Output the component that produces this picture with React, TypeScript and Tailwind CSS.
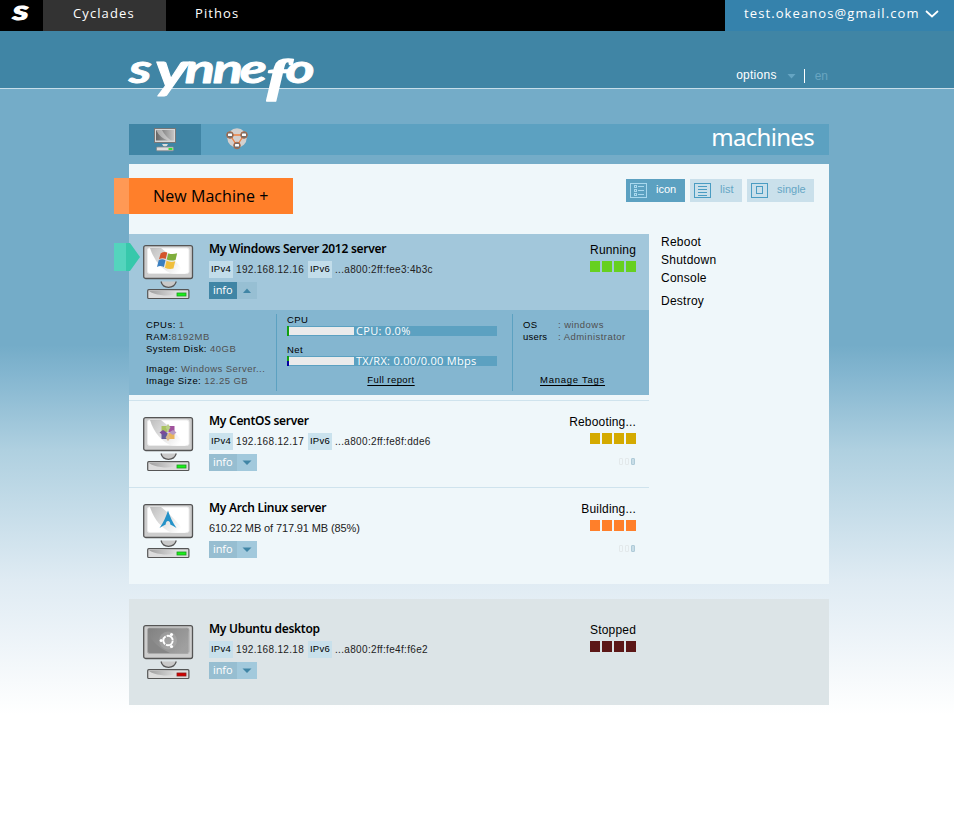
import React from "react";

const LIB = "font-['Liberation_Sans',sans-serif]";

type Os = "windows" | "centos" | "arch" | "ubuntu";

function OsLogo({ os }: { os: Os }) {
  if (os === "windows")
    return (
      <g transform="translate(14 5.500) scale(1.06)">
        <path d="M3.5 2.5Q7 .6 9.7 2L8.2 8Q5.200 6.500 1.900 8.200Z" fill="#d3542b" />
        <path d="M10.700 2.500Q14 4.200 19 2.700L17.500 9Q13 10.300 9.200 8.500Z" fill="#7fae3c" />
        <path d="M1.600 9.200Q5 7.500 8 9.200L6.500 15.500Q3.200 13.800 0 15.500Z" fill="#3b7fc0" />
        <path d="M9 9.700Q12.600 11.500 17.200 10.200L15.500 17Q11.500 18.200 7.500 16.200Z" fill="#f0bf3c" />
      </g>
    );
  if (os === "centos")
    return (
      <g transform="translate(25 15.500)">
        <rect x="-5.800" y="-5.800" width="11.600" height="11.600" fill="#d9c8dc" transform="rotate(45)" />
        <rect x="-6.500" y="-6.500" width="6" height="6" fill="#a9c15e" />
        <rect x=".5" y="-6.500" width="6" height="6" fill="#a0529d" />
        <rect x="-6.500" y=".5" width="6" height="6" fill="#635b9b" />
        <rect x=".5" y=".5" width="6" height="6" fill="#e8b45c" />
        <path d="M0 -8.500L2.400 -5L0 -1L-2.400 -5Z" fill="#b9cf86" />
        <path d="M8.500 0L5 2.400L1 0L5 -2.400Z" fill="#b79ac4" />
        <path d="M0 8.500L2.400 5L0 1L-2.400 5Z" fill="#d9b98a" />
        <path d="M-8.500 0L-5 2.400L-1 0L-5 -2.400Z" fill="#7a4a99" />
      </g>
    );
  if (os === "arch")
    return (
      <path d="M25 6.500C23.500 12 20 19 16.500 24Q20 21.500 22.700 20.500Q22.800 17 25 17Q27.200 17 27.300 20.500Q30 21.500 33.500 24C30 19 26.500 12 25 6.500Z" fill="#2492c8" />
    );
  return (
    <g transform="translate(25 15.500)" fill="none" stroke="#fff">
      <circle r="9" fill="#fff" fillOpacity=".13" stroke="none" />
      <circle r="4.700" strokeWidth="1.900" strokeDasharray="8.800 1.050" strokeDashoffset="-.5" />
      <g fill="#fff" stroke="none">
        <circle cx="-6.800" r="1.600" />
        <circle cx="3.500" cy="-6" r="1.600" />
        <circle cx="3.500" cy="6" r="1.600" />
      </g>
    </g>
  );
}

function Monitor({ os }: { os: Os }) {
  const off = os === "ubuntu";
  return (
    <svg width="51" height="56" viewBox="0 0 51 56" className="mt-px block">
      <defs>
        <linearGradient id={"gloss" + os} x1="0" y1="0" x2="1" y2=".6">
          <stop offset="0" stopColor={off ? "#777" : "#a9a9a9"} />
          <stop offset="1" stopColor={off ? "#cfcfcf" : "#fff"} />
        </linearGradient>
        <linearGradient id={"base" + os} x1="0" y1="0" x2="1" y2="0">
          <stop offset="0" stopColor="#9f9f9f" />
          <stop offset="1" stopColor="#e4e4e4" />
        </linearGradient>
      </defs>
      <path d="M18 36.500Q19.500 42.300 25.500 42.300Q31.500 42.300 33.300 36.500Z" fill="#c9c9c9" />
      <path d="M18 36.500Q19.500 42.300 25.500 42.300Q31.500 42.300 33.300 36.500" fill="none" stroke="#555" strokeWidth="1.200" />
      <rect x=".7" y=".7" width="48.800" height="32.800" rx="2" fill="#cdcdcd" stroke="#555" strokeWidth="1.300" />
      <rect x="4.500" y="3" width="41.500" height="25.500" rx="2" fill={off ? "#868686" : "#fff"} stroke={off ? "#aaa" : "#ececec"} />
      <path
        d={off ? "M5 3H40Q46 3 46 8V28H27Q10 21 5 7Z" : "M7 3H18Q30 12 43 29H29Q13 22 7 3Z"}
        fill={"url(#gloss" + os + ")"}
        opacity={off ? ".35" : ".75"}
      />
      <rect x="4.700" y="44.700" width="41.200" height="8.800" rx="1" fill="#dcdcdc" stroke="#555" strokeWidth="1.200" />
      <path d="M6 46H36Q30 52 18 50Q10 49 6 46Z" fill={"url(#base" + os + ")"} />
      <rect x="34" y="48" width="9" height="3" fill={off ? "#d40000" : "#19f01a"} stroke={off ? "#891c1c" : "#1e9a22"} strokeWidth=".8" />
      <OsLogo os={os} />
    </svg>
  );
}

function Ips({ v4, v6 }: { v4: string; v6: string }) {
  const tag = "flex h-[17px] w-6 items-center justify-center bg-[#c5dfeb]/90 tracking-[.3px] text-black";
  return (
    <div className="flex h-[17px] items-center whitespace-nowrap text-[9.5px] text-[#222]">
      <span className={tag}>IPv4</span>
      <span className="ml-[3px] w-[72px] text-[10px] tracking-[.32px]">{v4}</span>
      <span className={tag}>IPv6</span>
      <span className="ml-[3px] text-[10px] tracking-[.33px]">{v6}</span>
    </div>
  );
}

function Machine({ os, name, state, color, children, open, busy }: {
  os: Os; name: string; state: string; color: string; children: React.ReactNode; open?: boolean; busy?: boolean;
}) {
  return (
    <div className="flex h-[76px] w-[520px] pt-[10px] pl-[14px]">
      <Monitor os={os} />
      <div className="ml-[15px] w-[280px] -mt-[4px]">
        <h3 className="h-[21px] whitespace-nowrap font-['Noto_Sans',sans-serif] text-[12px] leading-[17px] font-semibold tracking-[-.28px] text-black">{name}</h3>
        {children}
        <div className="mt-[4px] flex h-[17px] w-12 font-['Open_Sans',sans-serif] text-[11px] leading-[16px] text-white">
          <span className={"w-7 pl-1 tracking-[-.1px] " + (open ? "bg-[#4085a5]" : "bg-[#97bed1]")}>info</span>
          <span className={"flex w-5 items-center justify-center " + (open ? "bg-[#97bfd3]" : "bg-[#a2c9dc]")}>
            <svg width="10" height="5" viewBox="0 0 10 5">
              <path d={open ? "M1 5L5 .5L9 5Z" : "M.5 .5H9.500L5 5Z"} fill="#4085a5" />
            </svg>
          </span>
        </div>
      </div>
      <div className="flex w-[147px] flex-col items-end">
        <span className="h-[17px] text-[12px] leading-[13px] tracking-[.18px] text-black">{state}</span>
        <div className="flex gap-[2px]">
          {[0, 1, 2, 3].map((i) => <i key={i} className={"h-[11px] w-[10px] " + color} />)}
        </div>
        {busy && (
          <div className="mt-[14px] mr-px flex gap-[2px]">
            <i className="h-[7px] w-1 rounded-[1px] border border-[#e3e9eb]" />
            <i className="h-[7px] w-1 rounded-[1px] border border-[#e3e9eb]" />
            <i className="h-[7px] w-1 rounded-[1px] border border-[#afcbd8] bg-[#c8dde7]" />
          </div>
        )}
      </div>
    </div>
  );
}

function Field({ k, v }: { k: string; v: string }) {
  return <div className="h-3 whitespace-nowrap"><span className="text-black">{k}</span><span className="text-[#505050]">{v}</span></div>;
}

function Meter({ label, text, net }: { label: string; text: string; net?: boolean }) {
  return (
    <div className="h-[30px]">
      <div className="h-[12px] text-[9.5px] leading-[12px] tracking-[.4px] text-black">{label}</div>
      <div className="flex h-[10px] w-[210px] bg-[#5ca1c1]">
        <div className="w-[2px] bg-[#10a010]">{net && <div className="mt-[5px] h-[5px] bg-[#0000a0]" />}</div>
        <div className="my-px w-[65px] bg-[#ebebeb]" />
        <span className="ml-[2px] font-['Open_Sans',sans-serif] text-[11px] leading-[10px] tracking-[.3px] whitespace-nowrap text-white">{text}</span>
      </div>
    </div>
  );
}

function Details() {
  return (
    <div className="flex h-[85px] w-[520px] bg-[#84b6d0] py-1 text-[9.5px] leading-[12px] tracking-[.46px]">
      <div className="w-[148px] border-r border-[#5ca1c1] pt-[5px] pl-[17px]">
        <Field k="CPUs: " v="1" />
        <Field k="RAM:" v="8192MB" />
        <Field k="System Disk: " v="40GB" />
        <div className="mt-2">
          <Field k="Image: " v="Windows Server..." />
          <Field k="Image Size: " v="12.25 GB" />
        </div>
      </div>
      <div className="w-[236px] border-r border-[#5ca1c1] pl-[10px]">
        <Meter label="CPU" text="CPU: 0.0%" />
        <Meter label="Net" text="TX/RX: 0.00/0.00 Mbps" net />
        <div className="w-[208px] text-center text-[9.5px] tracking-[.42px] text-black underline underline-offset-2">Full report</div>
      </div>
      <div className="flex flex-col pt-[5px] pl-[10px]">
        <div className="flex h-3"><span className="w-[35px] text-black">OS</span><span className="text-[#505050]">: windows</span></div>
        <div className="flex h-3"><span className="w-[35px] tracking-[.2px] text-black">users</span><span className="text-[#505050]">: Administrator</span></div>
        <div className="mt-[31px] ml-[17px] tracking-[.74px] text-black underline underline-offset-2">Manage Tags</div>
      </div>
    </div>
  );
}

function ViewIcon({ kind }: { kind: string }) {
  const c = kind === "icon" ? "#a9d8ee" : "#4a9cc2";
  return (
    <svg width="17" height="15" viewBox="0 0 17 15" fill="none" stroke={c} shapeRendering="crispEdges">
      <rect x=".5" y=".5" width="16" height="14" />
      {kind === "icon" && <path d="M4.500 2.500h2v2h-2zM4.500 6.500h2v2h-2zM4.500 10.500h2v2h-2zM8 3.500h6M8 7.500h6M8 11.500h6" />}
      {kind === "list" && <path d="M4 3.500h9M4 6.500h9M4 9.500h9M4 12.500h9" />}
      {kind === "single" && <path d="M5.500 3.500h6v7h-6z" />}
    </svg>
  );
}

function ViewButton({ kind, width }: { kind: string; width: string }) {
  return (
    <div className={"flex h-[23px] pl-1 pt-1 text-[11px] leading-[12px] " + width + (kind === "icon" ? " bg-[#5ca1c1] text-white" : " bg-[#cae0eb] text-[#65a6c5]")}>
      <ViewIcon kind={kind} />
      <span className="ml-[9px]">{kind}</span>
    </div>
  );
}

function TabMonitor() {
  return (
    <svg width="22" height="24" viewBox="0 0 22 24">
      <defs><linearGradient id="tabscreen"><stop stopColor="#666" /><stop offset="1" stopColor="#c4c4c4" /></linearGradient></defs>
      <rect x=".5" y=".5" width="21" height="14" fill="#d8d8d8" stroke="#777" />
      <rect x="2" y="2" width="18" height="10.500" fill="url(#tabscreen)" />
      <path d="M2 2H8Q11 8 17 12.500H14Q6 10 2 2Z" fill="#e8e8e8" opacity=".5" />
      <path d="M8 16H14Q13 18.500 11 18.500T8 16Z" fill="#ddd" />
      <rect x="2.500" y="19" width="17" height="3.800" rx="1" fill="#ddd" stroke="#888" strokeWidth=".8" />
      <rect x="14.500" y="20" width="4" height="2" fill="#38df38" />
    </svg>
  );
}

function TabNetwork() {
  return (
    <svg width="23" height="23" viewBox="0 0 23 23">
      <circle cx="11" cy="10" r="9.700" fill="#d3d0ce" />
      <path d="M4 7H18L11 17.500Z" fill="none" stroke="#f08040" strokeWidth="1.300" />
      {[[4, 7], [18, 7], [11, 17.5]].map(([x, y]) => (
        <g key={x}>
          <circle cx={x} cy={y} r="3.300" fill="#6f6f6f" stroke="#b06a45" />
          <rect x={x - 2} y={y - 1.500} width="4" height="2.500" rx=".5" fill="#fff" />
        </g>
      ))}
    </svg>
  );
}

export default function App() {
  return (
    <div className={"h-[825px] overflow-hidden bg-[linear-gradient(to_bottom,#74acc8_345px,#84b6d0_375px,#afd0e0_450px,#dfebf3_580px,#fff_715px)] " + LIB}>
      <nav className="flex h-[31px] bg-black font-['Open_Sans',sans-serif] text-[13px] leading-[27px] tracking-[1.1px] text-white">
        <div className="w-[43px]">
          <svg className="block" width="43" height="31" viewBox="0 0 43 31">
            <text x="12.500" y="19.500" textLength="15.500" lengthAdjust="spacingAndGlyphs" fill="#fff" stroke="#fff" strokeWidth="1.100" letterSpacing="0" className="font-['Lato',sans-serif] text-[18px] font-black italic">S</text>
          </svg>
        </div>
        <div className="w-[123px] bg-[#333] pl-[30px]">Cyclades</div>
        <div className="flex-1 pl-[29px]">Pithos</div>
        <div className="flex w-[229px] bg-[#3582ac] pl-[19px]">
          <span className="w-[175px]">test.okeanos@gmail.com</span>
          <svg className="mt-[10px] ml-[6px]" width="14" height="8" viewBox="0 0 14 8"><path d="M1 1L7 6.500L13 1" fill="none" stroke="#fff" strokeWidth="1.700" /></svg>
        </div>
      </nav>
      <header className="h-[58px] border-b border-[#c7deea] bg-[#4085a5]">
        <div className="mx-auto flex w-[700px] translate-x-[2px] justify-between">
          <svg className="mt-[22px] shrink-0 overflow-visible" width="190" height="56" viewBox="0 0 190 56">
            <text transform="scale(1.36 1)" x="0 19 41 61.500 81.500 101.500 115" y="30" fill="#fff" stroke="#fff" strokeWidth=".9" strokeLinejoin="round" className="font-['Lato',sans-serif] text-[41px] font-bold italic">
              s<tspan dy="5" className="text-[50px]">y</tspan><tspan dy="-5">nne</tspan><tspan dy="8" strokeWidth="1.600" className="font-['Liberation_Serif',serif] text-[46px]">f</tspan><tspan dy="-8">o</tspan>
            </text>
          </svg>
          <div className="mt-[36px] mr-px flex h-[16px] text-[12px] leading-[16px] text-white">
            <span className="tracking-[.25px]">options</span>
            <svg className="mt-[7px] ml-[10px]" width="9" height="5" viewBox="0 0 9 5"><path d="M.5 0H8.500L4.500 4.500Z" fill="#65a5c3" /></svg>
            <span className="mt-[2px] ml-[8px] h-[14px] w-px bg-white" />
            <span className="ml-[10px] pt-px text-[#69a5c1]">en</span>
          </div>
        </div>
      </header>
      <main className="mx-auto mt-[35px] w-[700px] translate-x-[2px]">
        <div className="flex h-[31px] bg-[#5ca1c1]">
          <div className="flex w-[72px] justify-center bg-[#4085a5] pt-1"><TabMonitor /></div>
          <div className="w-[72px] pt-1 pl-[25px]"><TabNetwork /></div>
          <h1 className="ml-auto pr-[15px] font-['Noto_Sans',sans-serif] text-[24px] leading-[26px] tracking-[-.7px] text-white">machines</h1>
        </div>
        <section className="mt-[9px] h-[420px] bg-[#eff7fa] pt-[14px]">
          <div className="flex h-[56px] items-start">
            <div className="-ml-[15px] flex h-9 w-[179px] border-l-[15px] border-[#ff9955] bg-[#ff7f2a] pl-[24px] font-['Open_Sans',sans-serif] text-[16px] leading-[36px] tracking-[.08px] whitespace-nowrap text-black">New Machine +</div>
            <div className="mt-px mr-[15px] ml-auto flex gap-[5px]">
              <ViewButton kind="icon" width="w-[59px]" />
              <ViewButton kind="list" width="w-[52px]" />
              <ViewButton kind="single" width="w-[67px]" />
            </div>
          </div>
          <div className="flex">
            <div className="w-[520px]">
              <div className="relative bg-[#a2c7db]">
                <svg className="absolute top-[9px] -left-[15px]" width="26" height="28" viewBox="0 0 26 28">
                  <path d="M0 0H13V28H0Z" fill="#54d4bd" /><path d="M12 0H16L26 14L16 28H12Z" fill="#37c8ab" />
                </svg>
                <Machine os="windows" name="My Windows Server 2012 server" state="Running" color="bg-[#66d020]" open>
                  <Ips v4="192.168.12.16" v6="...a800:2ff:fee3:4b3c" />
                </Machine>
              </div>
              <Details />
              <div className="mt-[5px] h-[87px] border-t border-[#cfe3ed] pt-[5px]">
                <Machine os="centos" name="My CentOS server" state="Rebooting..." color="bg-[#d4aa00]" busy>
                  <Ips v4="192.168.12.17" v6="...a800:2ff:fe8f:dde6" />
                </Machine>
              </div>
              <div className="h-[87px] border-t border-[#cfe3ed] pt-[5px]">
                <Machine os="arch" name="My Arch Linux server" state="Building..." color="bg-[#ff7f2a]" busy>
                  <div className="h-[17px] text-[11px] leading-[17px] tracking-[-.12px] text-[#222]">610.22 MB of 717.91 MB (85%)</div>
                </Machine>
              </div>
            </div>
            <div className="pl-3 text-[12px] leading-[18px] tracking-[.25px] text-black">
              <div className="-mt-px">Reboot</div>
              <div>Shutdown</div>
              <div>Console</div>
              <div className="mt-[5px]">Destroy</div>
            </div>
          </div>
        </section>
        <section className="mt-[15px] h-[106px] bg-[#dce4e7] pt-[15px]">
          <Machine os="ubuntu" name="My Ubuntu desktop" state="Stopped" color="bg-[#5c1717]">
            <Ips v4="192.168.12.18" v6="...a800:2ff:fe4f:f6e2" />
          </Machine>
        </section>
      </main>
    </div>
  );
}
